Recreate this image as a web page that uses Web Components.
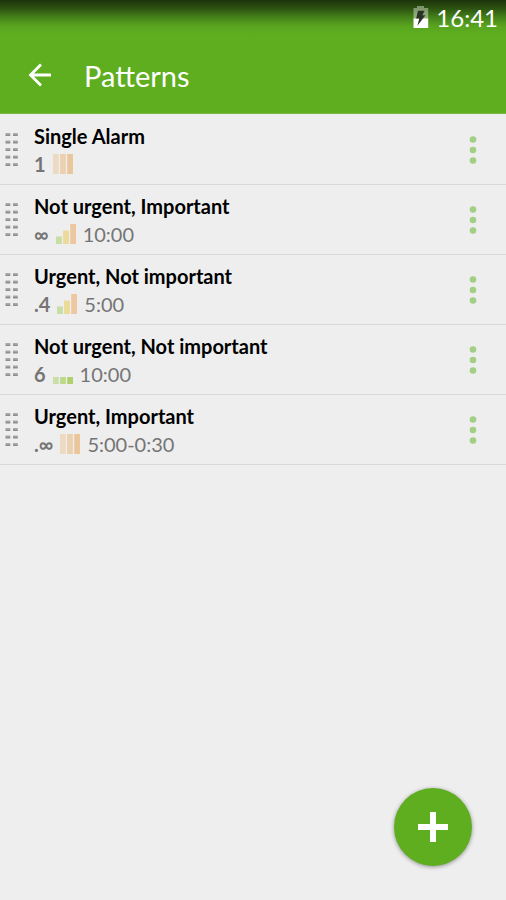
<!DOCTYPE html>
<html lang="en">
<head>
<meta charset="utf-8">
<meta name="viewport" content="width=device-width, initial-scale=1">
<title>Patterns</title>
<style>
  html, body { margin: 0; height: 100%; }
  body { background: #eee; font-family: Lato, "Liberation Sans", sans-serif; }
</style>
</head>
<body>
<pattern-app>
  <status-bar slot="top" time="16:41"></status-bar>
  <app-bar slot="top" heading="Patterns"></app-bar>
  <pattern-row name="Single Alarm" count="1" bars="full"></pattern-row>
  <pattern-row name="Not urgent, Important" count="∞" bars="rising" time="10:00"></pattern-row>
  <pattern-row name="Urgent, Not important" count=".4" bars="rising" time="5:00"></pattern-row>
  <pattern-row name="Not urgent, Not important" count="6" bars="low" time="10:00"></pattern-row>
  <pattern-row name="Urgent, Important" count=".∞" bars="full" time="5:00-0:30"></pattern-row>
  <add-button slot="action"></add-button>
</pattern-app>
<script>
class Base extends HTMLElement {
  connectedCallback() {
    if (!this.shadowRoot) this.attachShadow({ mode: 'open' }).innerHTML = this.view();
  }
  attr(name) { return this.getAttribute(name) || ''; }
}

customElements.define('pattern-app', class extends Base {
  view() {
    return `<style>
      :host { display: flex; flex-direction: column; min-height: 100vh; background: #eee; }
      header { background: linear-gradient(#1c330b 0, #2b5010 8px, #44801a 17px, #59a41f 26px, #5eae20 34px); border-bottom: 1px solid #78b848; }
      main { flex: 1; padding-top: 1px; }
      .action { position: fixed; right: 34px; bottom: 34px; }
    </style>
    <header><slot name="top"></slot></header>
    <main><slot></slot></main>
    <div class="action"><slot name="action"></slot></div>`;
  }
});

customElements.define('status-bar', class extends Base {
  view() {
    return `<style>
      :host { display: flex; justify-content: flex-end; align-items: center; gap: 7px; height: 36px; padding-right: 8px; color: #fff; font-size: 24px; line-height: 36px; }
      svg { display: block; margin-bottom: 2px; }
    </style>
    <svg width="16" height="22" viewBox="0 0 16 22" aria-label="Battery charging" role="img">
      <path d="M0.5 2H4V0H11V2H15.2V13H0.5Z" fill="#fff" fill-opacity=".4"/>
      <path d="M0.5 12.5H15.2V22H0.5Z" fill="#fff"/>
      <path d="M5 4.800H11.500L9.400 9.200H12.400L4.400 19.800L6.300 12.600H3.200Z" fill="#2b3029"/>
    </svg>
    <span>${this.attr('time')}</span>`;
  }
});

customElements.define('app-bar', class extends Base {
  view() {
    return `<style>
      :host { display: flex; align-items: center; height: 77px; padding-left: 20px; gap: 24px; color: #fff; }
      button { display: grid; place-items: center; width: 40px; height: 40px; padding: 0; border: 0; background: none; color: inherit; }
      h1 { margin: 0; font-size: 29px; line-height: 36px; font-weight: 400; padding-top: 2px; }
    </style>
    <button type="button" aria-label="Back">
      <svg width="24" height="24" viewBox="0 0 24 24" fill="none" stroke="#fff" stroke-width="2.800"><path d="M23 12H3M13 1.500L2.500 12L13 22.500"/></svg>
    </button>
    <h1>${this.attr('heading')}</h1>`;
  }
});

customElements.define('level-bars', class extends Base {
  view() {
    const kinds = {
      full: [[20, '#ecdac3'], [20, '#ecd1b0'], [20, '#ebc69b']],
      rising: [[7.5, '#c8dea4'], [13.5, '#ebda98'], [20, '#ecc7a0']],
      low: [[7, '#c9dfa6'], [7, '#bdd98c'], [7, '#aed16c']]
    };
    const rects = kinds[this.attr('kind')].map(([h, c], i) =>
      `<rect x="${i * 7.1}" y="${20 - h}" width="5.8" height="${h}" fill="${c}"/>`).join('');
    return `<style>:host { display: block; } svg { display: block; }</style>
      <svg width="20" height="20" viewBox="0 0 20 20" aria-hidden="true">${rects}</svg>`;
  }
});

customElements.define('pattern-row', class extends Base {
  view() {
    let dashes = '', dots = '';
    for (let r = 0; r < 5; r++) {
      for (const x of [0.5, 8]) {
        dashes += `<rect x="${x}" y="${r * 7.5}" width="4.8" height="1.500" fill="#aaa"/><rect x="${x}" y="${r * 7.5 + 1.3}" width="4.800" height="1.700" fill="#8d8d8d"/>`;
      }
    }
    for (const y of [3.5, 14, 24.5]) dots += `<circle cx="4" cy="${y}" r="3.3"/>`;
    const time = this.attr('time');
    return `<style>
      :host { display: flex; align-items: center; height: 69px; border-bottom: 1px solid #d9d9d9; }
      button { display: flex; align-items: center; height: 69px; padding: 0; border: 0; background: none; }
      .grip { width: 34px; padding-left: 5px; }
      .menu { width: 66px; justify-content: center; }
      .body { flex: 1; min-width: 0; }
      h2 { margin: 0; color: #000; font-size: 20px; line-height: 28px; font-weight: 700; }
      .info { display: flex; align-items: center; gap: 7px; height: 28px; color: #757575; font-size: 20px; line-height: 28px; }
      b { font-weight: 700; }
    </style>
    <button class="grip" type="button" aria-label="Reorder ${this.attr('name')}"><svg width="14" height="33" viewBox="0 0 14 33">${dashes}</svg></button>
    <div class="body">
      <h2>${this.attr('name')}</h2>
      <div class="info"><b>${this.attr('count')}</b><level-bars kind="${this.attr('bars')}"></level-bars>${time ? `<span>${time}</span>` : ''}</div>
    </div>
    <button class="menu" type="button" aria-label="Options for ${this.attr('name')}"><svg width="8" height="28" viewBox="0 0 8 28" fill="#a2cf84">${dots}</svg></button>`;
  }
});

customElements.define('add-button', class extends Base {
  view() {
    return `<style>
      :host { display: block; }
      button { display: grid; place-items: center; width: 78px; height: 78px; padding: 0; border: 0; border-radius: 50%; background: #5eae20; box-shadow: 0 1px 4px rgba(0,0,0,.4); }
    </style>
    <button type="button" aria-label="Add pattern">
      <svg width="30" height="30" viewBox="0 0 30 30" fill="#fff"><path d="M12 0H18V12H30V18H18V30H12V18H0V12H12Z"/></svg>
    </button>`;
  }
});
</script>
</body>
</html>
